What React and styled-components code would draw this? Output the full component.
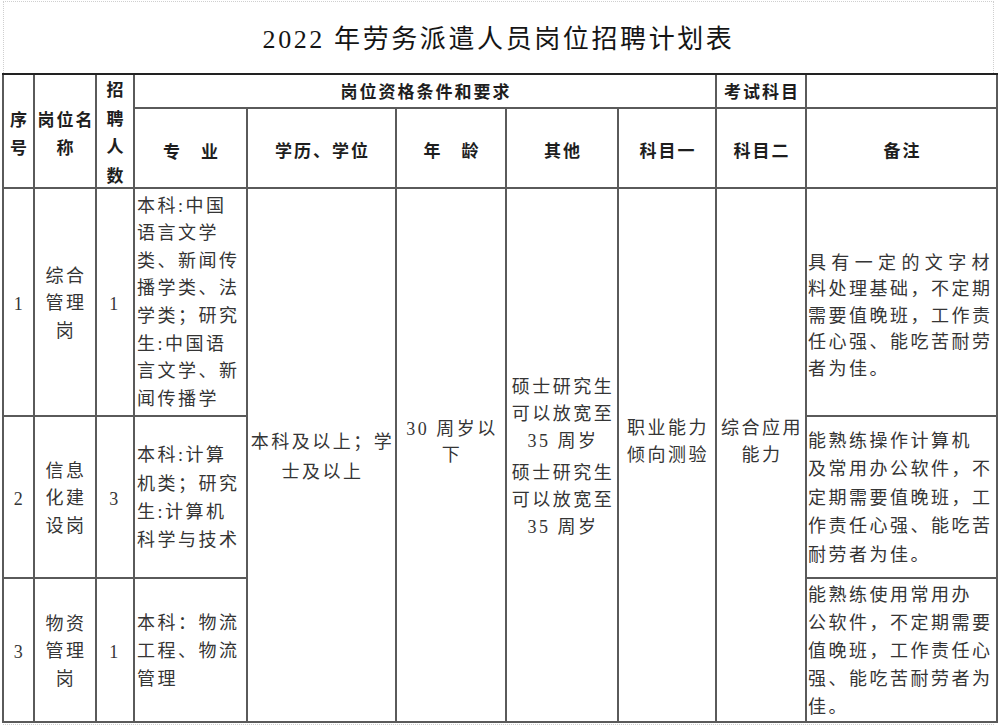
import React from 'react';
import styled, { createGlobalStyle, css } from 'styled-components';

const Global = createGlobalStyle`
  html, body { margin: 0; padding: 0; background: #fff; }
  body { font-family: "Liberation Serif", "Noto Sans CJK SC", serif; }
  * { box-sizing: border-box; }
`;

const Frame = styled.div`
  width: 991px;
  height: 724px;
  margin: 1px 0 0 3px;
  border: 1px dotted #cfcfcf;
`;

const TitleBar = styled.div`
  height: 71px;
  display: flex;
  align-items: center;
  justify-content: center;
  padding-top: 5px;
`;

const Title = styled.h1`
  margin: 0;
  font-family: "Liberation Serif", "Noto Sans CJK SC", serif;
  font-weight: 400;
  font-size: 26px;
  letter-spacing: 2.6px;
  color: #151515;
  line-height: 1;
`;

const Grid = styled.div`
  display: grid;
  grid-template-columns: 29px 60px 36px 111px 147px 108px 110px 96px 88px 189px;
  grid-template-rows: 32px 78px 226px 160px 142px;
  gap: 2px;
  padding: 0 2px 2px 2px;
  border-top: 2px solid #222;
  background: #5a5a5a;
  width: max-content;
  margin-left: -2px;
`;

const place = css`
  grid-column: ${p => p.$col} / span ${p => p.$cs || 1};
  grid-row: ${p => p.$row} / span ${p => p.$rs || 1};
`;

const HeadCell = styled.div`
  ${place}
  background: #fff;
  display: flex;
  flex-direction: column;
  align-items: center;
  justify-content: center;
  text-align: center;
  font-family: "Noto Sans CJK SC", sans-serif;
  font-weight: 700;
  font-size: 17px;
  letter-spacing: 2px;
  line-height: ${p => p.$lh || 28}px;
  color: #1e1e1e;
  padding: ${p => p.$pad || '0 0 0 2px'};
`;

const BodyCell = styled.div`
  ${place}
  background: #fff;
  display: flex;
  flex-direction: column;
  justify-content: center;
  align-items: ${p => (p.$left ? 'stretch' : 'center')};
  text-align: ${p => (p.$left ? 'left' : 'center')};
  padding: ${p => p.$pad || '0 0 0 2px'};
  font-family: "Liberation Serif", "Noto Sans CJK SC", serif;
  font-size: 18px;
  letter-spacing: 2.5px;
  line-height: ${p => p.$lh || 28}px;
  color: #353535;
`;

const Line = styled.span`
  display: block;
  white-space: nowrap;
  ${p =>
    p.$spread &&
    css`
      text-align: justify;
      text-align-last: justify;
      margin-right: 4px;
    `}
`;

const Group = styled.div`
  display: flex;
  flex-direction: column;
  align-items: center;
  & + & { margin-top: 5px; }
`;

const rows = [
  {
    no: '1',
    name: ['综合', '管理', '岗'],
    count: '1',
    major: ['本科:中国', '语言文学', '类、新闻传', '播学类、法', '学类；研究', '生:中国语', '言文学、新', '闻传播学'],
    majorLh: 27.6,
    note: ['具有一定的文字材', '料处理基础，不定期', '需要值晚班，工作责', '任心强、能吃苦耐劳', '者为佳。'],
    noteLh: 26.6,
    notePad: '28px 0 0 1px',
    spreadFirst: true,
  },
  {
    no: '2',
    name: ['信息', '化建', '设岗'],
    count: '3',
    major: ['本科:计算', '机类；研究', '生:计算机', '科学与技术'],
    majorLh: 28.3,
    note: ['能熟练操作计算机', '及常用办公软件，不', '定期需要值晚班，工', '作责任心强、能吃苦', '耐劳者为佳。'],
    noteLh: 28.4,
    notePad: '2px 0 0 1px',
  },
  {
    no: '3',
    name: ['物资', '管理', '岗'],
    count: '1',
    major: ['本科：物流', '工程、物流', '管理'],
    majorLh: 28,
    note: ['能熟练使用常用办', '公软件，不定期需要', '值晚班，工作责任心', '强、能吃苦耐劳者为', '佳。'],
    noteLh: 28.2,
    notePad: '2px 0 0 1px',
  },
];

const lines = arr => arr.map((t, i) => <Line key={i}>{t}</Line>);

export default function App() {
  return (
    <>
      <Global />
      <Frame>
        <TitleBar>
          <Title>2022 年劳务派遣人员岗位招聘计划表</Title>
        </TitleBar>
        <Grid>
          <HeadCell $col={1} $row={1} $rs={2} $pad="4px 0 0 2px">{lines(['序', '号'])}</HeadCell>
          <HeadCell $col={2} $row={1} $rs={2} $pad="4px 0 0 2px">{lines(['岗位名', '称'])}</HeadCell>
          <HeadCell $col={3} $row={1} $rs={2} $lh={28.5} $pad="2px 0 0 2px">{lines(['招', '聘', '人', '数'])}</HeadCell>
          <HeadCell $col={4} $row={1} $cs={5}>岗位资格条件和要求</HeadCell>
          <HeadCell $col={9} $row={1}>考试科目</HeadCell>
          <HeadCell $col={10} $row={1} />
          <HeadCell $col={4} $row={2} $pad="6px 0 0 2px">专　业</HeadCell>
          <HeadCell $col={5} $row={2} $pad="4px 0 0 2px">学历、学位</HeadCell>
          <HeadCell $col={6} $row={2} $pad="4px 0 0 2px">年　龄</HeadCell>
          <HeadCell $col={7} $row={2} $pad="4px 0 0 2px">其他</HeadCell>
          <HeadCell $col={8} $row={2} $pad="4px 0 0 2px">科目一</HeadCell>
          <HeadCell $col={9} $row={2} $pad="4px 0 0 2px">科目二</HeadCell>
          <HeadCell $col={10} $row={2} $pad="4px 0 0 2px">备注</HeadCell>

          {rows.map((r, i) => (
            <React.Fragment key={r.no}>
              <BodyCell $col={1} $row={3 + i} $pad="4px 0 0 2px">{r.no}</BodyCell>
              <BodyCell $col={2} $row={3 + i} $lh={27.5} $pad="4px 0 0 2px">{lines(r.name)}</BodyCell>
              <BodyCell $col={3} $row={3 + i} $pad="4px 0 0 0">{r.count}</BodyCell>
              <BodyCell $col={4} $row={3 + i} $left $lh={r.majorLh} $pad="2px 0 0 2px">{lines(r.major)}</BodyCell>
              <BodyCell $col={10} $row={3 + i} $left $lh={r.noteLh} $pad={r.notePad}>
                {r.note.map((t, k) => (
                  <Line key={k} $spread={r.spreadFirst && k === 0}>{t}</Line>
                ))}
              </BodyCell>
            </React.Fragment>
          ))}

          <BodyCell $col={5} $row={3} $rs={3} $lh={30} $pad="4px 0 0 2px">{lines(['本科及以上；学', '士及以上'])}</BodyCell>
          <BodyCell $col={6} $row={3} $rs={3} $lh={26} $pad="0 0 26px 2px">{lines(['30 周岁以', '下'])}</BodyCell>
          <BodyCell $col={7} $row={3} $rs={3} $lh={27} $pad="4px 0 0 2px">
            <Group>{lines(['硕士研究生', '可以放宽至', '35 周岁'])}</Group>
            <Group>{lines(['硕士研究生', '可以放宽至', '35 周岁'])}</Group>
          </BodyCell>
          <BodyCell $col={8} $row={3} $rs={3} $lh={27} $pad="0 0 27px 2px">{lines(['职业能力', '倾向测验'])}</BodyCell>
          <BodyCell $col={9} $row={3} $rs={3} $lh={27} $pad="0 0 27px 2px">{lines(['综合应用', '能力'])}</BodyCell>
        </Grid>
      </Frame>
    </>
  );
}
